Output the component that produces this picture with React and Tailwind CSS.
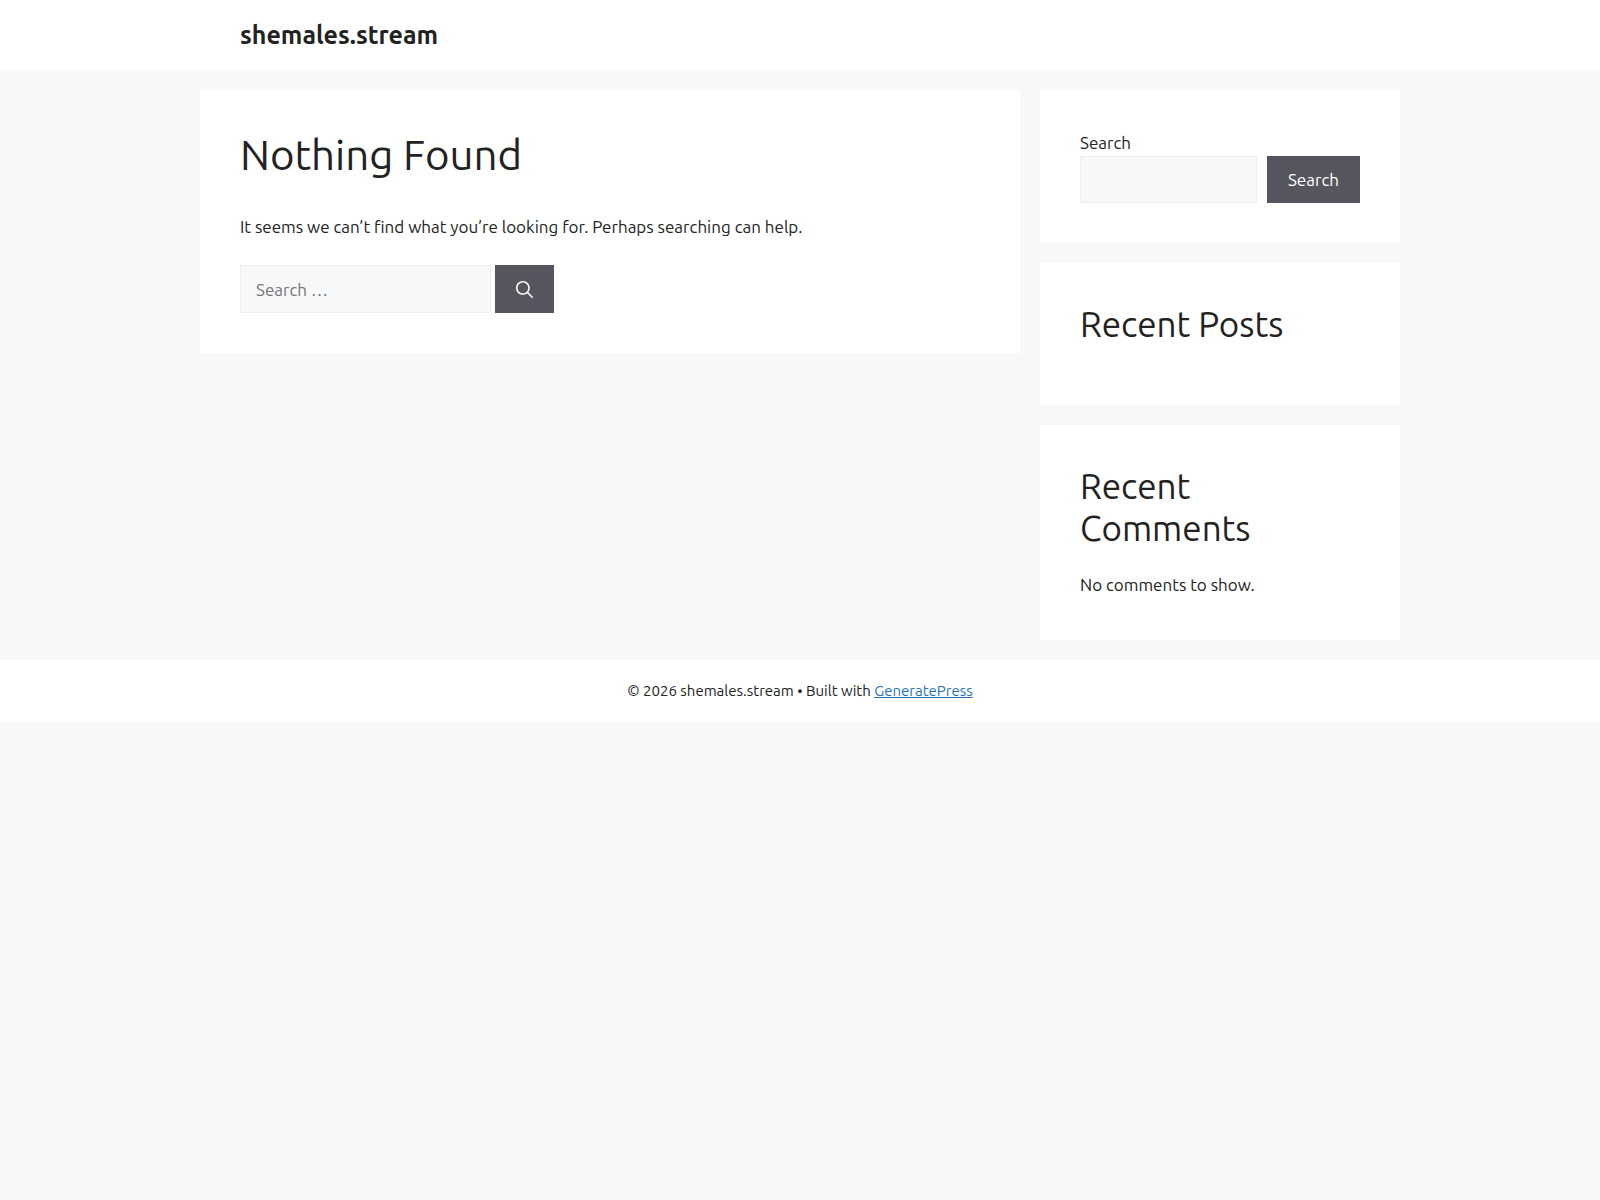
function SearchIcon() {
  return (
    <svg
      viewBox="0 0 512 512"
      className="size-[17px]"
      fill="currentColor"
      fillRule="evenodd"
      clipRule="evenodd"
      aria-hidden="true"
    >
      <path d="M208 48c-88.366 0-160 71.634-160 160s71.634 160 160 160 160-71.634 160-160S296.366 48 208 48zM0 208C0 93.125 93.125 0 208 0s208 93.125 208 208c0 48.741-16.765 93.566-44.843 129.024l133.826 134.018c9.366 9.379 9.355 24.575-.025 33.941-9.379 9.366-24.575 9.355-33.941-.025L337.238 370.987C301.747 399.167 256.839 416 208 416 93.125 416 0 322.875 0 208z" />
    </svg>
  );
}

function Widget({ children }) {
  return <section className="bg-white p-10">{children}</section>;
}

function WidgetTitle({ children }) {
  return <h2 className="mb-5 text-[35px] leading-[42px]">{children}</h2>;
}

export default function App() {
  return (
    <div className="min-h-screen bg-[#f7f8f9] font-['Ubuntu','Noto_Sans',sans-serif] text-[17px] leading-[26px] text-[#222222]">
      <header className="bg-white">
        <div className="mx-auto max-w-[1200px] px-10 py-5">
          <a href="#" className="block text-[25px] leading-[30px] font-bold">
            shemales.stream
          </a>
        </div>
      </header>

      <div className="mx-auto flex max-w-[1200px] items-start gap-5 py-5">
        <main className="min-w-0 flex-1 bg-white p-10">
          <h1 className="text-[42px] leading-[50px]">Nothing Found</h1>
          <p className="mt-[34px] mb-[25px]">
            It seems we can’t find what you’re looking for. Perhaps searching can help.
          </p>
          <form className="flex gap-1" onSubmit={(e) => e.preventDefault()}>
            <input
              type="search"
              aria-label="Search for:"
              placeholder="Search …"
              className="h-12 w-[251px] border border-[#eeeeee] bg-[#f7f8f9] px-[15px] placeholder:text-[#757575]"
            />
            <button
              type="submit"
              aria-label="Search"
              className="flex h-12 w-[59px] items-center justify-center bg-[#55555e] text-white"
            >
              <SearchIcon />
            </button>
          </form>
        </main>

        <aside className="flex w-[360px] shrink-0 flex-col gap-5">
          <Widget>
            <form onSubmit={(e) => e.preventDefault()}>
              <label htmlFor="sidebar-search" className="block">
                Search
              </label>
              <div className="flex gap-2.5">
                <input
                  id="sidebar-search"
                  type="search"
                  className="h-[47px] min-w-0 flex-1 border border-[#eeeeee] bg-[#f7f8f9] px-[15px]"
                />
                <button type="submit" className="h-[47px] w-[93px] bg-[#55555e] text-white">
                  Search
                </button>
              </div>
            </form>
          </Widget>
          <Widget>
            <WidgetTitle>Recent Posts</WidgetTitle>
          </Widget>
          <Widget>
            <WidgetTitle>Recent Comments</WidgetTitle>
            <p className="leading-[31px]">No comments to show.</p>
          </Widget>
        </aside>
      </div>

      <footer className="bg-white p-5 text-center text-[15px] leading-[22px]">
        © 2026 shemales.stream • Built with{" "}
        <a href="#" className="text-[#1e73be] underline">
          GeneratePress
        </a>
      </footer>
    </div>
  );
}
